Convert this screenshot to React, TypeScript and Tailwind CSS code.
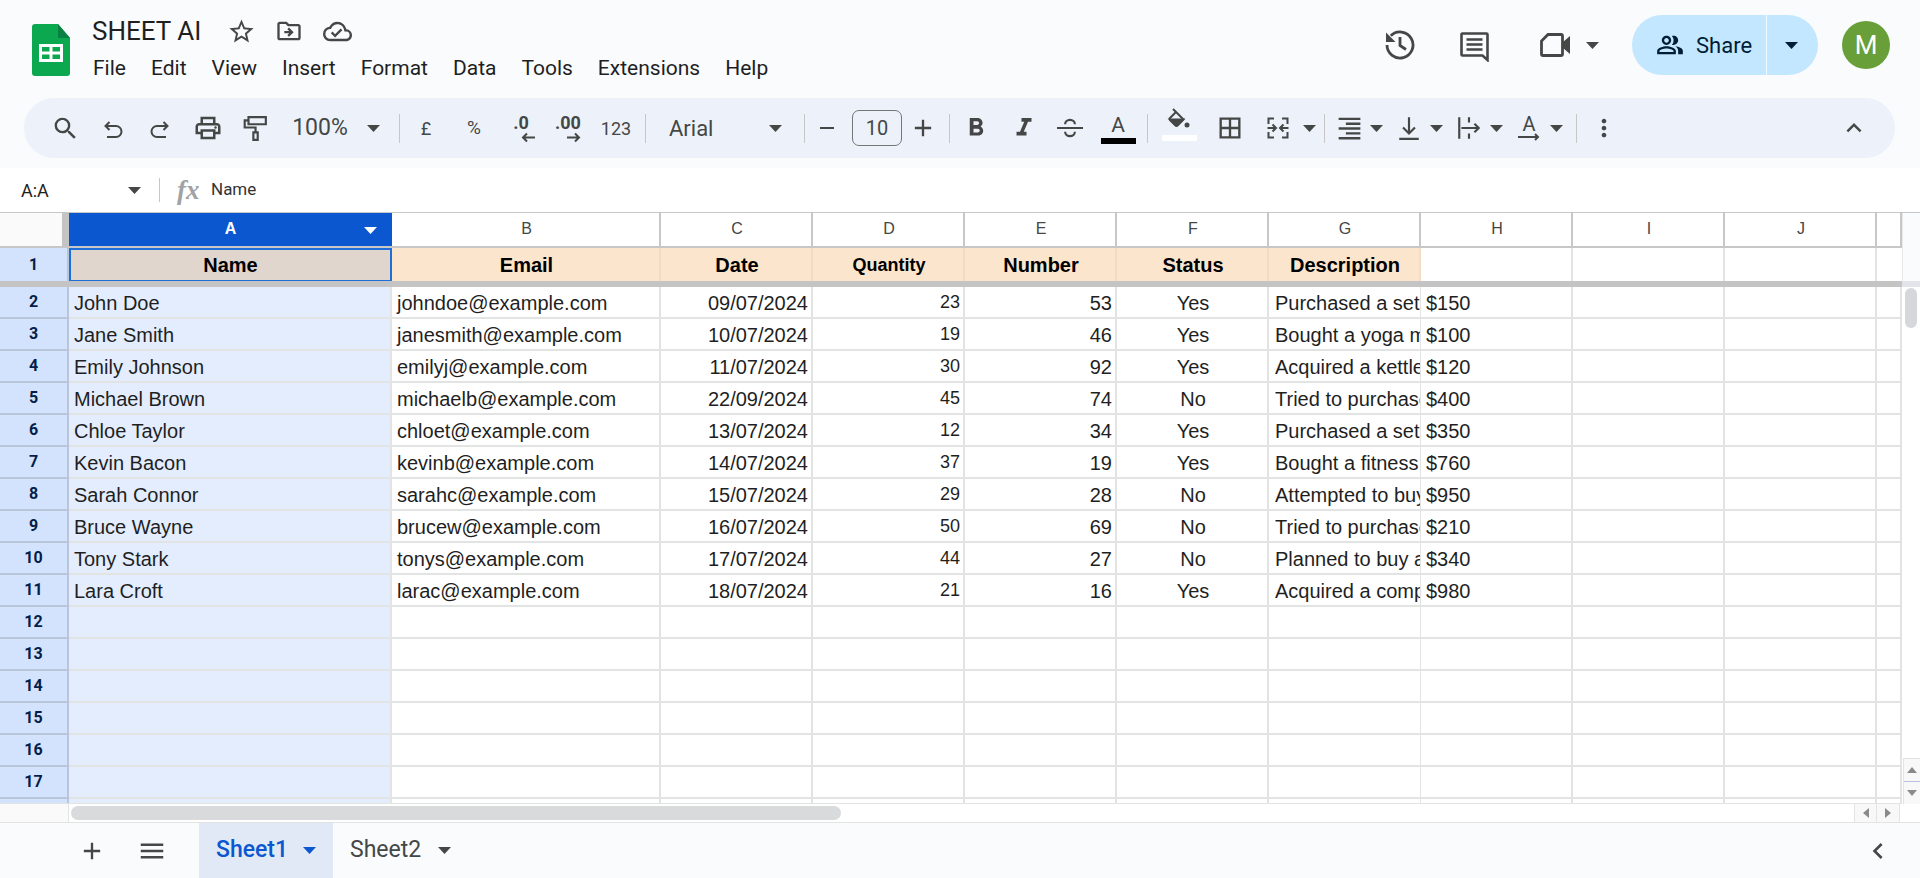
import type { ReactNode } from 'react';
import {
  MdSearch, MdOutlinePrint, MdFormatBold, MdFormatItalic, MdBorderAll, MdFormatAlignRight,
  MdMoreVert, MdExpandLess, MdAdd, MdMenu, MdChevronLeft, MdStarBorder, MdOutlineDriveFileMove,
  MdOutlineCloudDone, MdOutlinePeopleAlt, MdRemove,
} from 'react-icons/md';

const rowGrid = 'grid grid-cols-[69px_323px_269px_repeat(8,152px)_25px]';
const letters = ['B', 'C', 'D', 'E', 'F', 'G', 'H', 'I', 'J', ''];
const headers = ['Email', 'Date', 'Quantity', 'Number', 'Status', 'Description'];

const people = [
  ['John Doe', 'johndoe@example.com', '09/07/2024', '23', '53', 'Yes', 'Purchased a set', '$150'],
  ['Jane Smith', 'janesmith@example.com', '10/07/2024', '19', '46', 'Yes', 'Bought a yoga m', '$100'],
  ['Emily Johnson', 'emilyj@example.com', '11/07/2024', '30', '92', 'Yes', 'Acquired a kettle', '$120'],
  ['Michael Brown', 'michaelb@example.com', '22/09/2024', '45', '74', 'No', 'Tried to purchase', '$400'],
  ['Chloe Taylor', 'chloet@example.com', '13/07/2024', '12', '34', 'Yes', 'Purchased a set', '$350'],
  ['Kevin Bacon', 'kevinb@example.com', '14/07/2024', '37', '19', 'Yes', 'Bought a fitness', '$760'],
  ['Sarah Connor', 'sarahc@example.com', '15/07/2024', '29', '28', 'No', 'Attempted to buy', '$950'],
  ['Bruce Wayne', 'brucew@example.com', '16/07/2024', '50', '69', 'No', 'Tried to purchase', '$210'],
  ['Tony Stark', 'tonys@example.com', '17/07/2024', '44', '27', 'No', 'Planned to buy a', '$340'],
  ['Lara Croft', 'larac@example.com', '18/07/2024', '21', '16', 'Yes', 'Acquired a comp', '$980'],
];

const Caret = ({ className = 'fill-[#444746]' }: { className?: string }) => (
  <svg width="13" height="7" viewBox="0 0 13 7" className={className}>
    <path d="M0 0h13L6.5 7z" />
  </svg>
);

const Tool = ({ w, children, className = '' }: { w: string; children: ReactNode; className?: string }) => (
  <div className={`${w} h-full shrink-0 flex items-center justify-center text-[#444746] ${className}`}>{children}</div>
);

const Sep = ({ className }: { className: string }) => (
  <div className={`w-px h-[29px] shrink-0 bg-[#c7c7c7] ${className}`} />
);

// toolbar glyphs that the icon set draws differently from Sheets
const Glyph = ({ children, size = 24, className = '' }: { children: ReactNode; size?: number; className?: string }) => (
  <svg width={size} height={size} viewBox="0 0 24 24" fill="none" stroke="#444746" strokeWidth="2" className={className}>
    {children}
  </svg>
);

const UndoIcon = () => (
  <Glyph className="mt-[3px]">
    <path d="M8.500 4L4.500 8l4 4M4.500 8H15a5 5 0 0 1 0 11H6" />
  </Glyph>
);

const RedoIcon = () => (
  <Glyph className="mt-[3px]">
    <path d="M15.500 4l4 4-4 4M19.500 8H9a5 5 0 0 0 0 11h9" />
  </Glyph>
);

const PaintIcon = () => (
  <Glyph size={26}>
    <path d="M6 2h16v6.500H6zM6 5H2.500v6.500h10V16" />
    <path d="M10.500 16h4v7h-4z" />
  </Glyph>
);

const StrikeIcon = () => (
  <Glyph size={26}>
    <path d="M0 12h24M7.500 8.500a4.500 4 0 0 1 9 0M7.500 15.500a4.500 4 0 0 0 9 0" />
  </Glyph>
);

const FillIcon = () => (
  <Glyph size={24} className="-mt-[8px] mb-[3px]">
    <path d="M6 1l10.500 10.500-6 6a1.500 1.500 0 0 1-2 0l-5.500-5.500a1.500 1.500 0 0 1 0-2L9 4" />
    <path d="M3 11.500h13l-5.500 5.500a1.500 1.500 0 0 1-2 0z" fill="#444746" />
    <circle cx="20" cy="17" r="2.500" fill="#444746" stroke="none" />
  </Glyph>
);

const MergeIcon = () => (
  <Glyph>
    <path d="M8 2.500H2.500V8M2.500 16v5.500H8M16 2.500h5.500V8M21.500 16v5.500H16" />
    <path d="M1.500 12H10M6.500 8.500L10 12l-3.500 3.500M22.500 12H14M17.500 8.500L14 12l3.500 3.500" />
  </Glyph>
);

const ValignIcon = () => (
  <Glyph size={26}>
    <path d="M12 2v15M6.500 11.500L12 17l5.500-5.500M3 22h18" />
  </Glyph>
);

const WrapIcon = () => (
  <Glyph size={26}>
    <path d="M3 2v20M12 2v5M12 17v5M5 12h16M17 8l4 4-4 4" />
  </Glyph>
);

const RotateIcon = () => (
  <div className="relative w-[24px] h-[30px] flex justify-center">
    <span className="text-[20px] leading-[22px] font-['Roboto',sans-serif]">A</span>
    <svg width="24" height="10" viewBox="0 0 24 10" fill="none" stroke="#444746" strokeWidth="2" className="absolute bottom-[1px] left-0">
      <path d="M1 5h20M18 2l3 3-3 3" />
    </svg>
  </div>
);

const DecimalIcon = ({ label, dir }: { label: string; dir: 'left' | 'right' }) => (
  <div className="flex flex-col items-center">
    <span className="text-[18px] leading-[18px] font-bold font-['Roboto',sans-serif]">{label}</span>
    <svg width="15" height="11" viewBox="0 0 15 11" fill="none" stroke="#444746" strokeWidth="2" className={dir === 'left' ? 'ml-[14px]' : 'ml-[10px]'}>
      {dir === 'left' ? <path d="M14 5.5H2M6 1.5l-4 4 4 4" /> : <path d="M1 5.5h12M9 1.5l4 4-4 4" />}
    </svg>
  </div>
);

const Toolbar = () => (
  <div className="ml-[24px] w-[1871px] h-[60px] rounded-full bg-[#edf2fa] flex items-center pl-[18px] pr-[23px] font-['Roboto',sans-serif] text-[#444746]">
    <Tool w="w-[46px]"><MdSearch size={29} /></Tool>
    <Tool w="w-[50px]"><UndoIcon /></Tool>
    <Tool w="w-[44px]"><RedoIcon /></Tool>
    <Tool w="w-[52px]"><MdOutlinePrint size={30} /></Tool>
    <Tool w="w-[42px]"><PaintIcon /></Tool>
    <Tool w="w-[86px]" className="text-[23px] pl-[2px]">100%</Tool>
    <Tool w="w-[22px]"><Caret /></Tool>
    <Sep className="ml-[15px]" />
    <Tool w="w-[52px]" className="text-[18px]">£</Tool>
    <Tool w="w-[44px]" className="text-[19px]">%</Tool>
    <Tool w="w-[50px]"><DecimalIcon label=".0" dir="left" /></Tool>
    <Tool w="w-[44px]"><DecimalIcon label=".00" dir="right" /></Tool>
    <Tool w="w-[52px]" className="text-[18px]">123</Tool>
    <Sep className="ml-[3px]" />
    <Tool w="w-[118px]" className="justify-start! pl-[23px] text-[22px]">Arial</Tool>
    <Tool w="w-[22px]"><Caret /></Tool>
    <Sep className="ml-[18px]" />
    <Tool w="w-[44px]"><MdRemove size={24} /></Tool>
    <div className="ml-[3px] w-[50px] h-[36px] shrink-0 rounded-[7px] border border-[#747775] flex items-center justify-center text-[20px]">10</div>
    <Tool w="w-[42px]"><MdAdd size={28} /></Tool>
    <Sep className="ml-[5px]" />
    <Tool w="w-[52px]"><MdFormatBold size={30} /></Tool>
    <Tool w="w-[44px]"><MdFormatItalic size={30} /></Tool>
    <Tool w="w-[48px]"><StrikeIcon /></Tool>
    <Tool w="w-[48px]">
      <div className="flex flex-col items-center">
        <span className="text-[21px] leading-[24px]">A</span>
        <div className="w-[35px] h-[6px] mt-[1px] bg-black" />
      </div>
    </Tool>
    <Sep className="ml-[5px]" />
    <Tool w="w-[62px]">
      <div className="flex flex-col items-center">
        <FillIcon />
        <div className="w-[35px] h-[6px] bg-white" />
      </div>
    </Tool>
    <Tool w="w-[40px]"><MdBorderAll size={28} /></Tool>
    <Tool w="w-[46px]" className="ml-[5px]"><MergeIcon /></Tool>
    <Tool w="w-[16px]"><Caret /></Tool>
    <Sep className="ml-[7px]" />
    <Tool w="w-[40px]" className="ml-[4px]"><MdFormatAlignRight size={29} /></Tool>
    <Tool w="w-[14px]"><Caret /></Tool>
    <Tool w="w-[40px]" className="ml-[6px]"><ValignIcon /></Tool>
    <Tool w="w-[14px]"><Caret /></Tool>
    <Tool w="w-[40px]" className="ml-[6px]"><WrapIcon /></Tool>
    <Tool w="w-[14px]"><Caret /></Tool>
    <Tool w="w-[40px]" className="ml-[6px]"><RotateIcon /></Tool>
    <Tool w="w-[14px]"><Caret /></Tool>
    <Sep className="ml-[13px]" />
    <Tool w="w-[54px]"><MdMoreVert size={28} /></Tool>
    <Tool w="w-[36px]" className="ml-auto"><MdExpandLess size={30} /></Tool>
  </div>
);

const TopBar = () => (
  <div className="h-[98px] flex font-['Roboto',sans-serif] text-[#1f1f1f]">
    <svg width="38" height="52" viewBox="0 0 38 52" className="ml-[32px] mt-[24px] shrink-0">
      <path d="M3 0h23l12 14v35a3 3 0 0 1-3 3H3a3 3 0 0 1-3-3V3a3 3 0 0 1 3-3z" fill="#0ca84f" />
      <path d="M26 0l12 14H26z" fill="#0b8043" />
      <path d="M7 20h24v18H7z" fill="#fff" />
      <path d="M10 23h7.5v4.5H10zM20.5 23H28v4.5h-7.5zM10 30.500h7.5V35H10zM20.5 30.500H28V35h-7.500z" fill="#0ca84f" />
    </svg>
    <div className="ml-[22px] flex flex-col">
      <div className="flex items-center h-[34px] mt-[14px]">
        <span className="text-[26px] leading-[34px] w-[135px]">SHEET AI</span>
        <MdStarBorder size={29} className="text-[#444746] shrink-0" />
        <MdOutlineDriveFileMove size={28} className="text-[#444746] ml-[19px] shrink-0" />
        <MdOutlineCloudDone size={29} className="text-[#444746] ml-[20px] shrink-0" />
      </div>
      <div className="flex gap-[25px] text-[21px] leading-[28px] mt-[6px] ml-px">
        {['File', 'Edit', 'View', 'Insert', 'Format', 'Data', 'Tools', 'Extensions', 'Help'].map((m) => (
          <span key={m}>{m}</span>
        ))}
      </div>
    </div>
    <div className="ml-auto mr-[30px] flex items-center h-[60px] mt-[15px] text-[#444746]">
      <svg width="32" height="32" viewBox="0 0 32 32" fill="none" stroke="#444746" strokeWidth="2.800">
        <path d="M6.800 6.800A13 13 0 1 1 3 16" />
        <path d="M16 8v8.500l6 4" />
        <path d="M2 3.500V13h9.500z" fill="#444746" stroke="none" />
      </svg>
      <svg width="29" height="30" viewBox="0 0 29 30" fill="none" stroke="#444746" strokeWidth="2.600" className="ml-[44px] mt-[3px]">
        <path d="M2.500 1.500h24a1 1 0 0 1 1 1V28l-5-4.500H2.500a1 1 0 0 1-1-1v-20a1 1 0 0 1 1-1z" />
        <path d="M6.500 7.500h16M6.500 12.500h16M6.500 17.500h16" strokeWidth="2.400" />
      </svg>
      <svg width="30" height="24" viewBox="0 0 30 24" fill="none" stroke="#444746" strokeWidth="2.800" className="ml-[51px]">
        <path d="M8 1.500h13a1.500 1.500 0 0 1 1.500 1.500v18a1.500 1.500 0 0 1-1.500 1.500H3a1.500 1.500 0 0 1-1.500-1.500V8z" />
        <path d="M23 9l7-6v18l-7-6z" fill="#444746" stroke="none" />
      </svg>
      <div className="ml-[16px] mr-[33px]"><Caret /></div>
      <div className="w-[186px] h-[60px] rounded-full bg-[#c2e7ff] flex items-center text-[#001d35]">
        <MdOutlinePeopleAlt size={28} className="ml-[24px]" />
        <span className="ml-[12px] text-[22px] w-[70px]">Share</span>
        <div className="w-px h-full bg-white/70" />
        <div className="ml-[18px]"><Caret className="fill-[#001d35]" /></div>
      </div>
      <div className="ml-[24px] w-[48px] h-[48px] rounded-full bg-[#689f38] text-white text-[26px] flex items-center justify-center">M</div>
    </div>
  </div>
);

const FormulaBar = () => (
  <div className="h-[44px] mt-[10px] bg-white flex items-center font-['Roboto',sans-serif] text-[#1f1f1f]">
    <span className="ml-[21px] w-[107px] text-[18px]">A:A</span>
    <Caret />
    <div className="ml-[18px] w-px h-[24px] bg-[#c7c7c7]" />
    <span className="ml-[17px] w-[34px] font-['Liberation_Serif',serif] italic font-bold text-[27px] leading-none text-[#a0a3a6]">fx</span>
    <span className="text-[17px] text-[#333]">Name</span>
  </div>
);

const Cell = ({ children, className = '' }: { children?: ReactNode; className?: string }) => (
  <div className={`h-full min-w-0 overflow-hidden whitespace-nowrap flex items-center pt-[2px] border-b-2 border-[#e2e3e3] ${className}`}>
    {children}
  </div>
);

const DataRow = ({ n, row }: { n: number; row?: string[] }) => (
  <div className={`${rowGrid} h-[32px] text-[20px] text-[#1f1f1f] font-['Liberation_Sans',sans-serif]`}>
    <div className="bg-[#d3e3fd] border-r-2 border-b-2 border-[#b9c6d8] flex items-center justify-center text-[16px] font-bold text-[#041e49] font-['Roboto',sans-serif]">{n}</div>
    <Cell className="bg-[#e3edfd] border-r-2 border-[#c9d3e2] pl-[5px]">{row?.[0]}</Cell>
    <Cell className="border-r-2 pl-[5px]">{row?.[1]}</Cell>
    <Cell className="border-r-2 justify-end pr-[3px]">{row?.[2]}</Cell>
    <Cell className="border-r-2 justify-end pr-[3px] text-[18px]">{row?.[3]}</Cell>
    <Cell className="border-r-2 justify-end pr-[3px]">{row?.[4]}</Cell>
    <Cell className="border-r-2 justify-center pl-[2px]">{row?.[5]}</Cell>
    <Cell className="border-r pl-[6px]">{row?.[6]}</Cell>
    <Cell className="border-r-2 pl-[5px]">{row?.[7]}</Cell>
    <Cell className="border-r-2" />
    <Cell className="border-r-2" />
    <Cell className="border-r-2" />
  </div>
);

const Sheet = () => (
  <div className="flex h-[610px] border-t border-[#c7c7c7] bg-white">
    <div className="w-[1902px] flex flex-col font-['Liberation_Sans',sans-serif]">
      <div className={`${rowGrid} h-[35px] border-b-2 border-[#c7c7c7] text-[16px] text-[#444746]`}>
        <div className="bg-[#fafafa] border-r-[7px] border-[#c4c4c4]" />
        <div className="bg-[#0b57d0] text-white font-bold flex items-center justify-center relative">
          A
          <div className="absolute right-[15px] top-[14px]"><Caret className="fill-white" /></div>
        </div>
        {letters.map((l) => (
          <div key={l} className="border-r-2 border-[#c7c7c7] flex items-center justify-center pl-[2px]">{l}</div>
        ))}
      </div>
      <div className={`${rowGrid} h-[33px] text-[20px] font-bold text-black`}>
        <div className="bg-[#d3e3fd] border-r-2 border-[#b9c6d8] flex items-center justify-center text-[16px] text-[#041e49] font-['Roboto',sans-serif]">1</div>
        <div className="bg-[#e0d6cd] border-2 border-[#1f6fd8] flex items-center justify-center">Name</div>
        {headers.map((h) => (
          <div key={h} className={`bg-[#fce5cd] border-r-2 border-[#f1dcc6] flex items-center justify-center pl-[2px] ${h === 'Quantity' ? 'text-[18px] pt-[2px]' : ''}`}>{h}</div>
        ))}
        <div className="border-r-2 border-[#e2e3e3]" />
        <div className="border-r-2 border-[#e2e3e3]" />
        <div className="border-r-2 border-[#e2e3e3]" />
        <div />
      </div>
      <div className="h-[6px] bg-[#c4c4c4] shrink-0" />
      <div className="h-[517px] overflow-hidden">
        {Array.from({ length: 17 }, (_, i) => (
          <DataRow key={i} n={i + 2} row={people[i]} />
        ))}
      </div>
      <div className="flex h-[19px] border-t border-[#e2e3e3] bg-white">
        <div className="w-[69px] bg-[#fafafa] border-r border-[#e2e3e3]" />
        <div className="ml-[2px] mt-[2px] w-[770px] h-[14px] rounded-full bg-[#d9dadc]" />
        <div className="ml-auto w-[23px] flex items-center justify-center bg-[#f8f8f8] border-x border-[#e2e3e3]">
          <svg width="6" height="10" viewBox="0 0 6 10" className="fill-[#8a8a8a]"><path d="M6 0v10L0 5z" /></svg>
        </div>
        <div className="w-[23px] mr-[2px] flex items-center justify-center bg-[#f8f8f8] border-r border-[#e2e3e3]">
          <svg width="6" height="10" viewBox="0 0 6 10" className="fill-[#8a8a8a]"><path d="M0 0v10l6-5z" /></svg>
        </div>
      </div>
    </div>
    <div className="flex-1 flex flex-col bg-white">
      <div className="h-[68px] bg-[#fafbfc] border-l border-[#e8e8e8]" />
      <div className="h-[6px] bg-[#e1e5ea]" />
      <div className="ml-[3px] mt-[1px] w-[12px] h-[40px] rounded-full bg-[#d5d7db]" />
      <div className="mt-[430px] ml-px h-[46px] flex flex-col bg-[#f8f8f8] border-l border-t border-[#e2e3e3]">
        <div className="flex-1 flex items-center justify-center border-b border-[#b8bfe0]">
          <svg width="10" height="6" viewBox="0 0 10 6" className="fill-[#8a8a8a]"><path d="M0 6h10L5 0z" /></svg>
        </div>
        <div className="flex-1 flex items-center justify-center">
          <svg width="10" height="6" viewBox="0 0 10 6" className="fill-[#8a8a8a]"><path d="M0 0h10L5 6z" /></svg>
        </div>
      </div>
    </div>
  </div>
);

const TabBar = () => (
  <div className="h-[56px] flex items-center border-t border-[#e2e3e3] bg-[#f9fbfd] font-['Roboto',sans-serif] text-[#444746]">
    <MdAdd size={28} className="ml-[78px]" />
    <MdMenu size={30} className="ml-[31px]" />
    <div className="ml-[32px] w-[134px] h-full bg-[#e1e9f7] flex items-center pl-[17px] text-[#0b57d0] text-[23px] font-medium">
      <span className="w-[87px]">Sheet1</span>
      <Caret className="fill-[#0b57d0]" />
    </div>
    <span className="ml-[17px] w-[88px] text-[23px]">Sheet2</span>
    <Caret />
    <MdChevronLeft size={32} className="ml-auto mr-[26px]" />
  </div>
);

export default function App() {
  return (
    <div className="w-[1920px] h-[878px] overflow-hidden bg-[#f9fbfd] flex flex-col">
      <TopBar />
      <Toolbar />
      <FormulaBar />
      <Sheet />
      <TabBar />
    </div>
  );
}
